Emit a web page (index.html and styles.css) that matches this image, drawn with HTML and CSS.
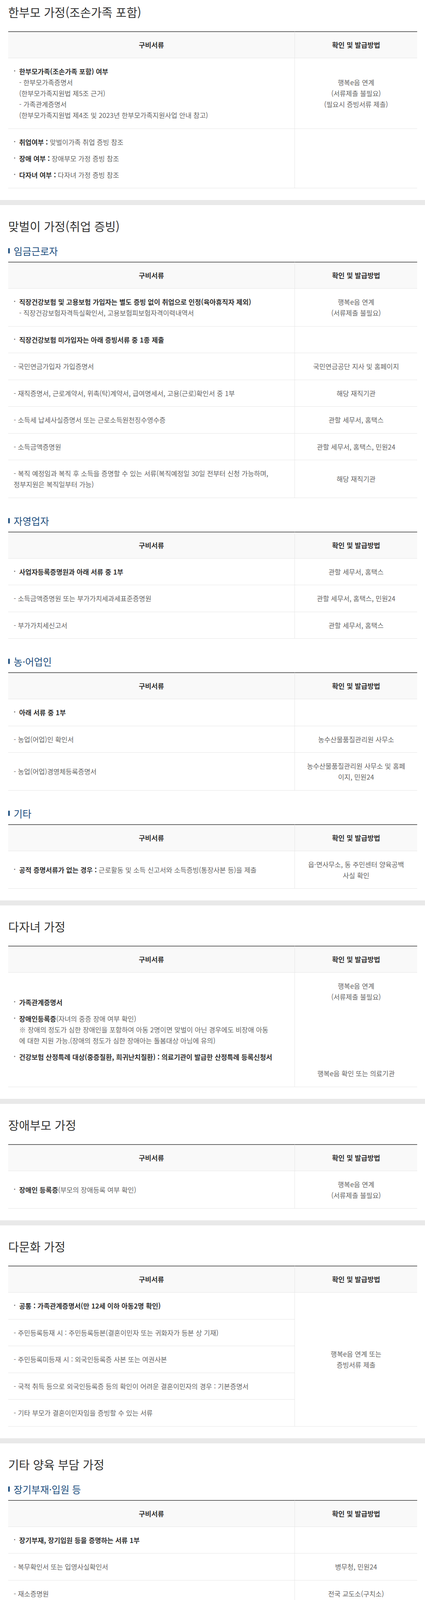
FILE: index.html
```html
<!DOCTYPE html>
<html lang="ko">
<head>
<meta charset="utf-8">
<title>양육공백 증빙서류</title>
<link rel="stylesheet" href="styles.css">
</head>
<body>

<section class="sec first">
  <h2 class="title">한부모 가정(조손가족 포함)</h2>
  <table class="doc">
    <colgroup><col class="c1"><col class="c2"></colgroup>
    <thead><tr><th>구비서류</th><th class="r">확인 및 발급방법</th></tr></thead>
    <tbody>
      <tr>
        <td><div class="bl"><div><b>한부모가족(조손가족 포함) 여부</b><br>- 한부모가족증명서<br>(한부모가족지원법 제5조 근거)<br>- 가족관계증명서<br>(한부모가족지원법 제4조 및 2023년 한부모가족지원사업 안내 참고)</div></div></td>
        <td class="r">행복e음 연계<br>(서류제출 불필요)<br>(필요시 증빙서류 제출)</td>
      </tr>
      <tr>
        <td>
          <div class="bl"><div><b>취업여부 :</b> 맞벌이가족 취업 증빙 참조</div></div>
          <div class="bl"><div><b>장애 여부 :</b> 장애부모 가정 증빙 참조</div></div>
          <div class="bl"><div><b>다자녀 여부 :</b> 다자녀 가정 증빙 참조</div></div>
        </td>
        <td class="r"></td>
      </tr>
    </tbody>
  </table>
</section>
<div class="band"></div>

<section class="sec">
  <h2 class="title">맞벌이 가정(취업 증빙)</h2>
  <h3 class="sub">임금근로자</h3>
  <table class="doc">
    <colgroup><col class="c1"><col class="c2"></colgroup>
    <thead><tr><th>구비서류</th><th class="r">확인 및 발급방법</th></tr></thead>
    <tbody>
      <tr>
        <td><div class="bl"><div><b>직장건강보험 및 고용보험 가입자는 별도 증빙 없이 취업으로 인정(육아휴직자 제외)</b><br>- 직장건강보험자격득실확인서, 고용보험피보험자격이력내역서</div></div></td>
        <td class="r">행복e음 연계<br>(서류제출 불필요)</td>
      </tr>
      <tr>
        <td><div class="bl"><div><b>직장건강보험 미가입자는 아래 증빙서류 중 1종 제출</b></div></div></td>
        <td class="r"></td>
      </tr>
      <tr><td>- 국민연금가입자 가입증명서</td><td class="r">국민연금공단 지사 및 홈페이지</td></tr>
      <tr><td>- 재직증명서, 근로계약서, 위촉(탁)계약서, 급여명세서, 고용(근로)확인서 중 1부</td><td class="r">해당 재직기관</td></tr>
      <tr><td>- 소득세 납세사실증명서 또는 근로소득원천징수영수증</td><td class="r">관할 세무서, 홈택스</td></tr>
      <tr><td>- 소득금액증명원</td><td class="r">관할 세무서, 홈택스, 민원24</td></tr>
      <tr><td>- 복직 예정임과 복직 후 소득을 증명할 수 있는 서류(복직예정일 30일 전부터 신청 가능하며,<br>정부지원은 복직일부터 가능)</td><td class="r">해당 재직기관</td></tr>
    </tbody>
  </table>

  <h3 class="sub">자영업자</h3>
  <table class="doc">
    <colgroup><col class="c1"><col class="c2"></colgroup>
    <thead><tr><th>구비서류</th><th class="r">확인 및 발급방법</th></tr></thead>
    <tbody>
      <tr><td><div class="bl"><div><b>사업자등록증명원과 아래 서류 중 1부</b></div></div></td><td class="r">관할 세무서, 홈택스</td></tr>
      <tr><td>- 소득금액증명원 또는 부가가치세과세표준증명원</td><td class="r">관할 세무서, 홈택스, 민원24</td></tr>
      <tr><td>- 부가가치세신고서</td><td class="r">관할 세무서, 홈택스</td></tr>
    </tbody>
  </table>

  <h3 class="sub">농·어업인</h3>
  <table class="doc">
    <colgroup><col class="c1"><col class="c2"></colgroup>
    <thead><tr><th>구비서류</th><th class="r">확인 및 발급방법</th></tr></thead>
    <tbody>
      <tr><td><div class="bl"><div><b>아래 서류 중 1부</b></div></div></td><td class="r"></td></tr>
      <tr><td>- 농업(어업)인 확인서</td><td class="r">농수산물품질관리원 사무소</td></tr>
      <tr><td>- 농업(어업)경영체등록증명서</td><td class="r">농수산물품질관리원 사무소 및 홈페<br>이지, 민원24</td></tr>
    </tbody>
  </table>

  <h3 class="sub">기타</h3>
  <table class="doc">
    <colgroup><col class="c1"><col class="c2"></colgroup>
    <thead><tr><th>구비서류</th><th class="r">확인 및 발급방법</th></tr></thead>
    <tbody>
      <tr><td><div class="bl"><div><b>공적 증명서류가 없는 경우 :</b> 근로활동 및 소득 신고서와 소득증빙(통장사본 등)을 제출</div></div></td><td class="r">읍·면사무소, 동 주민센터 양육공백<br>사실 확인</td></tr>
    </tbody>
  </table>
</section>
<div class="band"></div>

<section class="sec">
  <h2 class="title">다자녀 가정</h2>
  <table class="doc">
    <colgroup><col class="c1"><col class="c2"></colgroup>
    <thead><tr><th>구비서류</th><th class="r">확인 및 발급방법</th></tr></thead>
    <tbody>
      <tr>
        <td>
          <div class="bl"><div><b>가족관계증명서</b></div></div>
          <div class="bl"><div><b>장애인등록증</b>(자녀의 중증 장애 여부 확인)<br>※ 장애의 정도가 심한 장애인을 포함하여 아동 2명이면 맞벌이 아닌 경우에도 비장애 아동<br>에 대한 지원 가능.(장애의 정도가 심한 장애아는 돌봄대상 아님에 유의)</div></div>
          <div class="bl"><div><b>건강보험 산정특례 대상(중증질환, 희귀난치질환) : 의료기관이 발급한 산정특례 등록신청서</b></div></div>
        </td>
        <td class="r"><p class="line">행복e음 연계<br>(서류제출 불필요)</p><p class="line gap6">행복e음 확인 또는 의료기관</p></td>
      </tr>
    </tbody>
  </table>
</section>
<div class="band"></div>

<section class="sec">
  <h2 class="title">장애부모 가정</h2>
  <table class="doc">
    <colgroup><col class="c1"><col class="c2"></colgroup>
    <thead><tr><th>구비서류</th><th class="r">확인 및 발급방법</th></tr></thead>
    <tbody>
      <tr><td><div class="bl"><div><b>장애인 등록증</b>(부모의 장애등록 여부 확인)</div></div></td><td class="r">행복e음 연계<br>(서류제출 불필요)</td></tr>
    </tbody>
  </table>
</section>
<div class="band"></div>

<section class="sec">
  <h2 class="title">다문화 가정</h2>
  <table class="doc">
    <colgroup><col class="c1"><col class="c2"></colgroup>
    <thead><tr><th>구비서류</th><th class="r">확인 및 발급방법</th></tr></thead>
    <tbody>
      <tr><td><div class="bl"><div><b>공통 : 가족관계증명서(만 12세 이하 아동2명 확인)</b></div></div></td><td class="r" rowspan="5">행복e음 연계 또는<br>증빙서류 제출</td></tr>
      <tr><td>- 주민등록등재 시 : 주민등록등본(결혼이민자 또는 귀화자가 등본 상 기재)</td></tr>
      <tr><td>- 주민등록미등재 시 : 외국인등록증 사본 또는 여권사본</td></tr>
      <tr><td>- 국적 취득 등으로 외국인등록증 등의 확인이 어려운 결혼이민자의 경우 : 기본증명서</td></tr>
      <tr><td>- 기타 부모가 결혼이민자임을 증빙할 수 있는 서류</td></tr>
    </tbody>
  </table>
</section>
<div class="band"></div>

<section class="sec last">
  <h2 class="title">기타 양육 부담 가정</h2>
  <h3 class="sub">장기부재·입원 등</h3>
  <table class="doc">
    <colgroup><col class="c1"><col class="c2"></colgroup>
    <thead><tr><th>구비서류</th><th class="r">확인 및 발급방법</th></tr></thead>
    <tbody>
      <tr><td><div class="bl"><div><b>장기부재, 장기입원 등을 증명하는 서류 1부</b></div></div></td><td class="r"></td></tr>
      <tr><td>- 복무확인서 또는 입영사실확인서</td><td class="r">병무청, 민원24</td></tr>
      <tr><td>- 재소증명원</td><td class="r">전국 교도소(구치소)</td></tr>
      <tr><td>- 의사진단서(5일이상 입원)</td><td class="r">해당 병의원</td></tr>
      <tr><td>- 장기요양인정서</td><td class="r">국민건강보험공단</td></tr>
      <tr><td>- 건강보험 산정특례 대상(중증질환, 희귀난치성질환) : 의료기관이 발급한 산정특례 등록신청<br>서</td><td class="r">행복e음 확인 또는 의료기관</td></tr>
    </tbody>
  </table>

  <h3 class="sub">학교 재학</h3>
  <table class="doc">
    <colgroup><col class="c1"><col class="c2"></colgroup>
    <thead><tr><th>구비서류</th><th class="r">확인 및 발급방법</th></tr></thead>
    <tbody>
      <tr><td><div class="bl"><div><b>재학증명서(대학, 대학원 등)</b><br>※ 정기적으로 수업을 받지 않는 방송통신대학교 등도 출석 수업 등 양육공백 시 서비스 지원</div></div></td><td class="r">해당 학교</td></tr>
    </tbody>
  </table>

  <h3 class="sub">취업 준비</h3>
  <table class="doc">
    <colgroup><col class="c1"><col class="c2"></colgroup>
    <thead><tr><th>구비서류</th><th class="r">확인 및 발급방법</th></tr></thead>
    <tbody>
      <tr><td><div class="bl"><div><b>취업준비 입증 서류 1부</b><br>※ 취업준비를 위한 프로그램참여 및 학원 수강 등은 현장 출석에 한함</div></div></td><td class="r"></td></tr>
      <tr><td>- 직업능력개발훈련 수강증</td><td class="r">해당 직업훈련기관</td></tr>
      <tr><td>- 취업지원프로그램 참여확인서</td><td class="r">관할 고용센터</td></tr>
      <tr><td>- 학원 수강증</td><td class="r">해당 기관</td></tr>
    </tbody>
  </table>

  <h3 class="sub">모(母)의 출산</h3>
  <table class="doc">
    <colgroup><col class="c1"><col class="c2"></colgroup>
    <thead><tr><th>구비서류</th><th class="r">확인 및 발급방법</th></tr></thead>
    <tbody>
      <tr><td><div class="bl"><div><b>모(母)의 임신으로 돌봄 공백이 발생한 경우, 임신판정일로부터 총 5개월(다태아 6개월)의 기<br>간을 이용 가능(계속기간이며 분할이용 불가)</b><br>※ 유·사산인 경우 유·사산일로부터 총 30일(다태아 60일)</div></div></td><td class="r"></td></tr>
      <tr><td>- 진단서 등 임신을 증명할 수 있는 서류(임신판정일 명시)</td><td class="r">해당 병의원</td></tr>
    </tbody>
  </table>

  <h3 class="sub">아동학대 피해위기 아동가정</h3>
  <table class="doc">
    <colgroup><col class="c1"><col class="c2"></colgroup>
    <thead><tr><th>구비서류</th><th class="r">확인 및 발급방법</th></tr></thead>
    <tbody>
      <tr><td><div class="bl"><div><b>양육공백인정확인서</b><br>- 아동학대 전담공무원 또는 아동보호전문기관의 사례관리 중 아이돌봄서비스 정부지원을<br>위한 양육공백을 인정받은 경우</div></div></td><td class="r">아동학대 전담공무원 또는 아동보호<br>전문기관</td></tr>
    </tbody>
  </table>

  <div class="notes">
    <p>※ 양육부담 해소기간 도래 시, 양육공백 발생 사유 소멸 등의 적정성 확인 필요</p>
    <p>※ 상기 양육공백 인정사유 외에도 양육공백 발생사실을 객관적으로 증빙 가능한 경우 지자체 담당자 판단 하에 인정 가능</p>
    <p>※ 다자녀 가정, 다문화 가정의 경우 부모가 모두 비 취업 등 양육공백 사유가 없는 경우 정부지원 결정 대상 가정에서 제외</p>
  </div>
</section>

<div class="frame-end"></div>

</body>
</html>
```

FILE: styles.css
```css
* { box-sizing: border-box; }

html, body { margin: 0; padding: 0; background: #fff; }

body {
  font-family: "Noto Sans CJK KR", "Noto Sans", sans-serif;
  font-size: 17.2px;
  line-height: 28px;
  color: #666;
}

b { font-weight: 700; color: #333; }

.sec { padding: 35px 20px 30px 21px; }
.sec.first { padding-top: 12px; }
.sec.last { padding-bottom: 0; }

.band { height: 13px; background: #e9e9e9; }

.title {
  margin: 0;
  font-size: 30px;
  line-height: 36px;
  font-weight: 400;
  color: #333;
}
.title + .doc { margin-top: 32px; }
.title + .sub { margin-top: 30px; }

.sub {
  display: flex;
  align-items: center;
  gap: 10px;
  margin: 42px 0 12px;
  font-size: 24.6px;
  line-height: 32px;
  font-weight: 400;
  color: #1b4d7e;
}
.sub::before {
  content: "";
  flex: 0 0 4px;
  height: 14px;
  border-radius: 2px;
  background: #1b4d7e;
}

.doc {
  width: 100%;
  table-layout: fixed;
  border-collapse: separate;
  border-spacing: 0;
}
.c1 { width: 733px; }
.c2 { width: 314px; }

.doc th {
  background: #f9f9f9;
  border-top: 2px solid #666;
  border-bottom: 1px solid #e6e6e6;
  padding: 19px 0;
  font-size: 17.6px;
  line-height: 28px;
  font-weight: 700;
  color: #333;
  text-align: center;
}

.doc td {
  border-bottom: 1px solid #e6e6e6;
  padding: 20px 6px 19.5px 14px;
  vertical-align: middle;
  text-align: left;
}

.doc .r {
  border-left: 1px solid #e6e6e6;
  text-align: center;
  padding-left: 6px;
  padding-right: 6px;
}

.bl { display: flex; }
.bl::before {
  content: "";
  flex: 0 0 3px;
  height: 3px;
  margin: 11px 10px 0 1px;
  background: #888;
}
.bl + .bl { margin-top: 14px; }

.line { margin: 0; }
.gap6 { margin-top: 168px; }

.notes { margin: 16px 0 0 -9px; }
.notes p { margin: 0; }
.notes p + p { margin-top: 14px; }

.frame-end {
  height: 36px;
  background:
    radial-gradient(circle 30px at 100% 0, #fff 29px, #000 30.5px) left bottom / 30px 30px no-repeat,
    linear-gradient(#d4d4d4, #d4d4d4) right bottom / 4px 36px no-repeat;
}
```
